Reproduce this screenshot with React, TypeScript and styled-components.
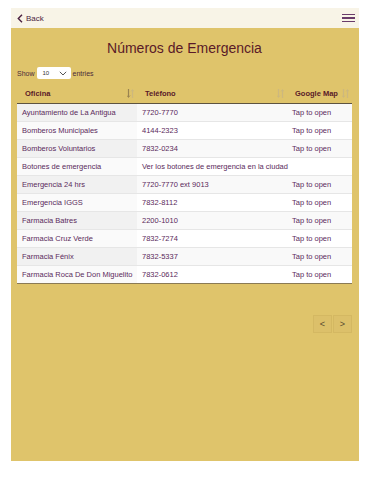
import React from 'react'
import styled, { createGlobalStyle } from 'styled-components'

const GlobalStyle = createGlobalStyle`
  html, body {
    margin: 0;
    padding: 0;
    background: #ffffff;
    font-family: "Liberation Sans", Arial, sans-serif;
  }
`

type Row = { oficina: string; telefono: string; map: string; wide?: boolean }

const rows: Row[] = [
  { oficina: 'Ayuntamiento de La Antigua', telefono: '7720-7770', map: 'Tap to open' },
  { oficina: 'Bomberos Municipales', telefono: '4144-2323', map: 'Tap to open' },
  { oficina: 'Bomberos Voluntarios', telefono: '7832-0234', map: 'Tap to open' },
  { oficina: 'Botones de emergencia', telefono: 'Ver los botones de emergencia en la ciudad', map: '', wide: true },
  { oficina: 'Emergencia 24 hrs', telefono: '7720-7770 ext 9013', map: 'Tap to open' },
  { oficina: 'Emergencia IGGS', telefono: '7832-8112', map: 'Tap to open' },
  { oficina: 'Farmacia Batres', telefono: '2200-1010', map: 'Tap to open' },
  { oficina: 'Farmacia Cruz Verde', telefono: '7832-7274', map: 'Tap to open' },
  { oficina: 'Farmacia Fénix', telefono: '7832-5337', map: 'Tap to open' },
  { oficina: 'Farmacia Roca De Don Miguelito', telefono: '7832-0612', map: 'Tap to open' },
]

const SortIcon = ({ active }: { active?: boolean }) => (
  <svg width="7" height="9" viewBox="0 0 7 9">
    <path d="M1.5 0 L1.5 8" stroke={active ? '#9a8450' : '#cdb87e'} strokeWidth="1.2" />
    <path d="M0 6.5 L1.5 8.5 L3 6.5" fill="none" stroke={active ? '#9a8450' : '#cdb87e'} strokeWidth="0.8" />
    <path d="M5.5 9 L5.5 1" stroke="#cdb87e" strokeWidth="1.2" />
    <path d="M4 2.5 L5.5 0.5 L7 2.5" fill="none" stroke="#cdb87e" strokeWidth="0.8" />
  </svg>
)

export default function App() {
  return (
    <>
      <GlobalStyle />
      <Page>
        <TopBar>
          <BackLink>
            <svg width="6" height="9" viewBox="0 0 6 9">
              <path d="M5 0.8 L1.3 4.5 L5 8.2" fill="none" stroke="#4a1f3f" strokeWidth="1.4" />
            </svg>
            Back
          </BackLink>
          <Burger>
            <span />
            <span />
            <span />
          </Burger>
        </TopBar>
        <Panel>
          <Title>Números de Emergencia</Title>
          <LengthRow>
            Show
            <Select>
              <span>10</span>
              <svg width="8" height="5" viewBox="0 0 8 5">
                <path d="M0.8 0.8 L4 4 L7.2 0.8" fill="none" stroke="#555" strokeWidth="1" />
              </svg>
            </Select>
            entries
          </LengthRow>
          <Table>
            <colgroup>
              <col style={{ width: 120 }} />
              <col style={{ width: 150 }} />
              <col />
            </colgroup>
            <thead>
              <tr>
                <Th>
                  <HeadInner>Oficina<SortIcon active /></HeadInner>
                </Th>
                <Th>
                  <HeadInner>Teléfono<SortIcon /></HeadInner>
                </Th>
                <Th>
                  <HeadInner>Google Map<SortIcon /></HeadInner>
                </Th>
              </tr>
            </thead>
            <tbody>
              {rows.map((r, i) => (
                <Tr key={r.oficina} $odd={i % 2 === 0}>
                  <Td $sorted $odd={i % 2 === 0}>{r.oficina}</Td>
                  {r.wide ? (
                    <Td colSpan={2}>{r.telefono}</Td>
                  ) : (
                    <>
                      <Td>{r.telefono}</Td>
                      <Td>{r.map}</Td>
                    </>
                  )}
                </Tr>
              ))}
            </tbody>
          </Table>
          <Pager>
            <PageButton>&lt;</PageButton>
            <PageButton>&gt;</PageButton>
          </Pager>
        </Panel>
      </Page>
    </>
  )
}

const Page = styled.div`
  padding: 8px 10px 20px 11px;
`

const TopBar = styled.div`
  height: 20px;
  background: #f8f4e7;
  display: flex;
  align-items: center;
  justify-content: space-between;
  padding: 0 4px 0 6px;
`

const BackLink = styled.a`
  display: flex;
  align-items: center;
  gap: 3px;
  font-size: 8px;
  color: #4a1f3f;
`

const Burger = styled.div`
  display: flex;
  flex-direction: column;
  gap: 2px;
  width: 13px;
  span {
    display: block;
    height: 1.5px;
    background: #6a3c6a;
  }
`

const Panel = styled.div`
  background: #dfc46b;
  height: 433px;
  padding: 11px 7px 0 6px;
  box-sizing: border-box;
`

const Title = styled.h1`
  margin: 0;
  text-align: center;
  font-size: 14px;
  font-weight: normal;
  color: #5a1a28;
  line-height: 18px;
`

const LengthRow = styled.div`
  display: flex;
  align-items: center;
  gap: 2px;
  margin-top: 10px;
  font-size: 7px;
  color: #4a2a3a;
`

const Select = styled.div`
  width: 34px;
  height: 12px;
  background: #ffffff;
  border-radius: 2px;
  display: flex;
  align-items: center;
  justify-content: space-between;
  padding: 0 4px 0 6px;
  box-sizing: border-box;
  font-size: 6px;
  color: #333;
`

const Table = styled.table`
  width: 100%;
  table-layout: fixed;
  margin-top: 5px;
  border-collapse: collapse;
  font-size: 7.5px;
  border-bottom: 1px solid #8a7a55;
`

const Th = styled.th`
  height: 19px;
  padding: 0 3px 0 8px;
  text-align: left;
  font-weight: bold;
  white-space: nowrap;
  color: #5a1a28;
  border-bottom: 1px solid #5d5340;
`

const HeadInner = styled.div`
  display: flex;
  align-items: center;
  justify-content: space-between;
`

const Tr = styled.tr<{ $odd: boolean }>`
  background: ${({ $odd }) => ($odd ? '#f9f9f9' : '#ffffff')};
`

const Td = styled.td<{ $sorted?: boolean; $odd?: boolean }>`
  height: 17px;
  padding: 0 4px 0 5px;
  color: #5b2a5c;
  white-space: nowrap;
  overflow: visible;
  border-top: 1px solid #e6e6e6;
  background: ${({ $sorted, $odd }) => ($sorted ? ($odd ? '#f1f1f1' : '#fafafa') : 'transparent')};
`

const Pager = styled.div`
  display: flex;
  justify-content: flex-end;
  gap: 1px;
  margin-top: 31px;
`

const PageButton = styled.div`
  width: 19px;
  height: 18px;
  display: flex;
  align-items: center;
  justify-content: center;
  font-size: 9px;
  color: #5a4a30;
  background: #dcc06a;
  border: 1px solid #d4b862;
  box-sizing: border-box;
`
